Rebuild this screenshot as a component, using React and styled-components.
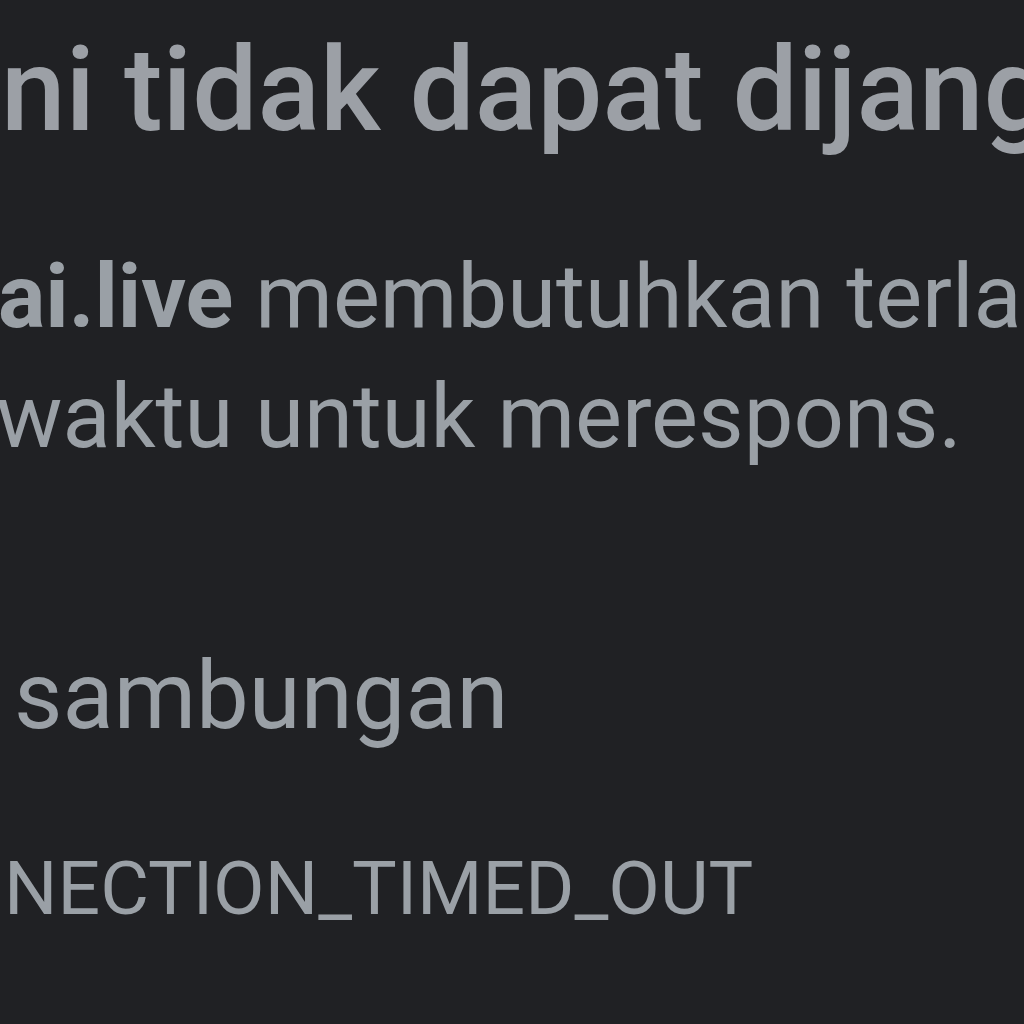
import React from "react";
import styled, { createGlobalStyle } from "styled-components";

const Global = createGlobalStyle`
  html, body {
    margin: 0;
    padding: 0;
    background: #202124;
  }
  body {
    font-family: Roboto, "Noto Sans", "Liberation Sans", sans-serif;
    color: #9aa0a6;
    -webkit-font-smoothing: antialiased;
  }
`;

const Page = styled.main`
  width: 1024px;
  height: 1024px;
  overflow: hidden;
  background: #202124;
  display: flex;
  flex-direction: column;
  padding-top: 31px;
  box-sizing: border-box;
`;

const Heading = styled.h1`
  margin: 0 0 0 1px;
  font-size: 116px;
  line-height: 118px;
  font-weight: 500;
  color: #9ca0a6;
  white-space: nowrap;
`;

const Summary = styled.p`
  margin: 88px 0 0 -2px;
  font-size: 88.5px;
  line-height: 120px;
  font-weight: 400;
  white-space: nowrap;
`;

const Line = styled.span`
  display: block;
  margin-left: ${(p) => p.$indent || 0}px;
`;

const Host = styled.strong`
  font-weight: 700;
`;

const Suggestion = styled.p`
  margin: 159px 0 0 ${(p) => p.$indent}px;
  font-size: 94px;
  line-height: 120px;
  white-space: nowrap;
`;

const ErrorCode = styled.div`
  margin: 87px 0 0 4px;
  font-size: 75px;
  line-height: 1.2;
  white-space: nowrap;
`;

export default function App() {
  return (
    <>
      <Global />
      <Page>
        <Heading>ni tidak dapat dijangkau</Heading>
        <Summary>
          <Line>
            <Host>ai.live</Host> membutuhkan terlalu lama
          </Line>
          <Line $indent={-2}>waktu untuk merespons.</Line>
        </Summary>
        <Suggestion $indent={14}>sambungan</Suggestion>
        <ErrorCode>NECTION_TIMED_OUT</ErrorCode>
      </Page>
    </>
  );
}
